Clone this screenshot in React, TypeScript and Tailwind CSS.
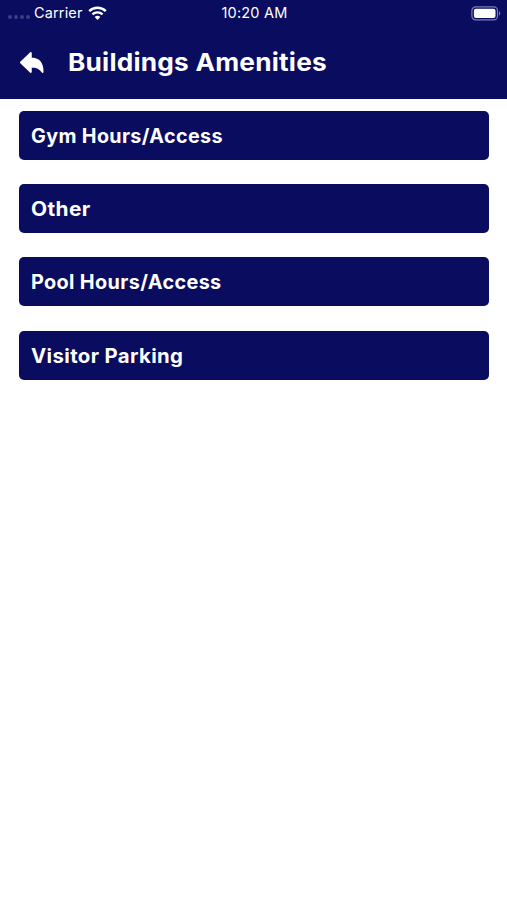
const amenities = [
  { name: "Gym Hours/Access", width: "scale-x-[1.012]" },
  { name: "Other", width: "scale-x-[1.07]" },
  { name: "Pool Hours/Access", width: "scale-x-[1.017]" },
  { name: "Visitor Parking", width: "scale-x-[1.045]" },
];

function WifiIcon() {
  return (
    <svg viewBox="0 0 18 14" className="w-[19px] h-[14.5px]" fill="none" stroke="currentColor">
      <path d="M1 4.9C5.5 0.6 12.5 0.6 17 4.9" strokeWidth="2.4" />
      <path d="M4.1 8.1C6.9 5.5 11.1 5.5 13.9 8.1" strokeWidth="2.3" />
      <path d="M6.3 10.5C7.8 9.1 10.2 9.1 11.7 10.5L9 13.4Z" fill="currentColor" stroke="none" />
    </svg>
  );
}

function BatteryIcon() {
  return (
    <svg viewBox="0 0 30 15" className="w-[30px] h-[15px]" fill="none">
      <rect x="0.9" y="0.9" width="25.6" height="13" rx="3.8" stroke="#7c7eb2" strokeWidth="1.2" />
      <rect x="2.9" y="2.8" width="21.6" height="9.3" rx="2" fill="white" />
      <path d="M28 5.2C29.6 5.8 29.6 9 28 9.6Z" fill="#7c7eb2" />
    </svg>
  );
}

function StatusBar() {
  return (
    <div className="grid grid-cols-3 items-center h-[26px] pl-2 pr-[6px] text-[14.5px]">
      <div className="flex items-center">
        <div className="flex gap-[2px] pt-[8px] mr-[4px]">
          {[0, 1, 2, 3].map((dot) => (
            <div key={dot} className="w-[4px] h-[4px] rounded-full bg-[#3c3f86]" />
          ))}
        </div>
        <span className="mr-[5px] tracking-[0.15px]">Carrier</span>
        <WifiIcon />
      </div>
      <span className="text-center whitespace-nowrap tracking-[0.2px]">10:20 AM</span>
      <div className="flex justify-end">
        <BatteryIcon />
      </div>
    </div>
  );
}

export default function App() {
  return (
    <div className="min-h-[900px] bg-white font-['Inter',sans-serif]">
      <header className="h-[98.5px] bg-[#090c5f] text-white">
        <StatusBar />
        <div className="flex items-center h-[72px] pl-5">
          <button aria-label="Back" className="w-[48px]">
            <svg viewBox="48 72 416 368" className="w-[23.5px] h-[21px]">
              <path
                d="M240 424v-96c116.4 0 159.39 33.76 208 96 0-119.23-39.57-240-208-240V88L64 256z"
                fill="currentColor"
                stroke="currentColor"
                strokeWidth="32"
                strokeLinejoin="round"
              />
            </svg>
          </button>
          <h1 className="text-[24.5px] font-bold whitespace-nowrap tracking-[0.2px] origin-left scale-x-[1.07]">
            Buildings Amenities
          </h1>
        </div>
      </header>

      {/* Amenity list */}
      <main className="flex flex-col gap-[24.4px] pt-[12.2px] pl-[19px] pr-[18px]">
        {amenities.map((item) => (
          <button
            key={item.name}
            className="flex items-center h-[49px] px-3 pt-[2px] rounded-[5px] bg-[#090c5f] text-white"
          >
            <span
              className={`text-[19.5px] font-bold whitespace-nowrap tracking-[0.35px] origin-left ${item.width}`}
            >
              {item.name}
            </span>
          </button>
        ))}
      </main>
    </div>
  );
}
